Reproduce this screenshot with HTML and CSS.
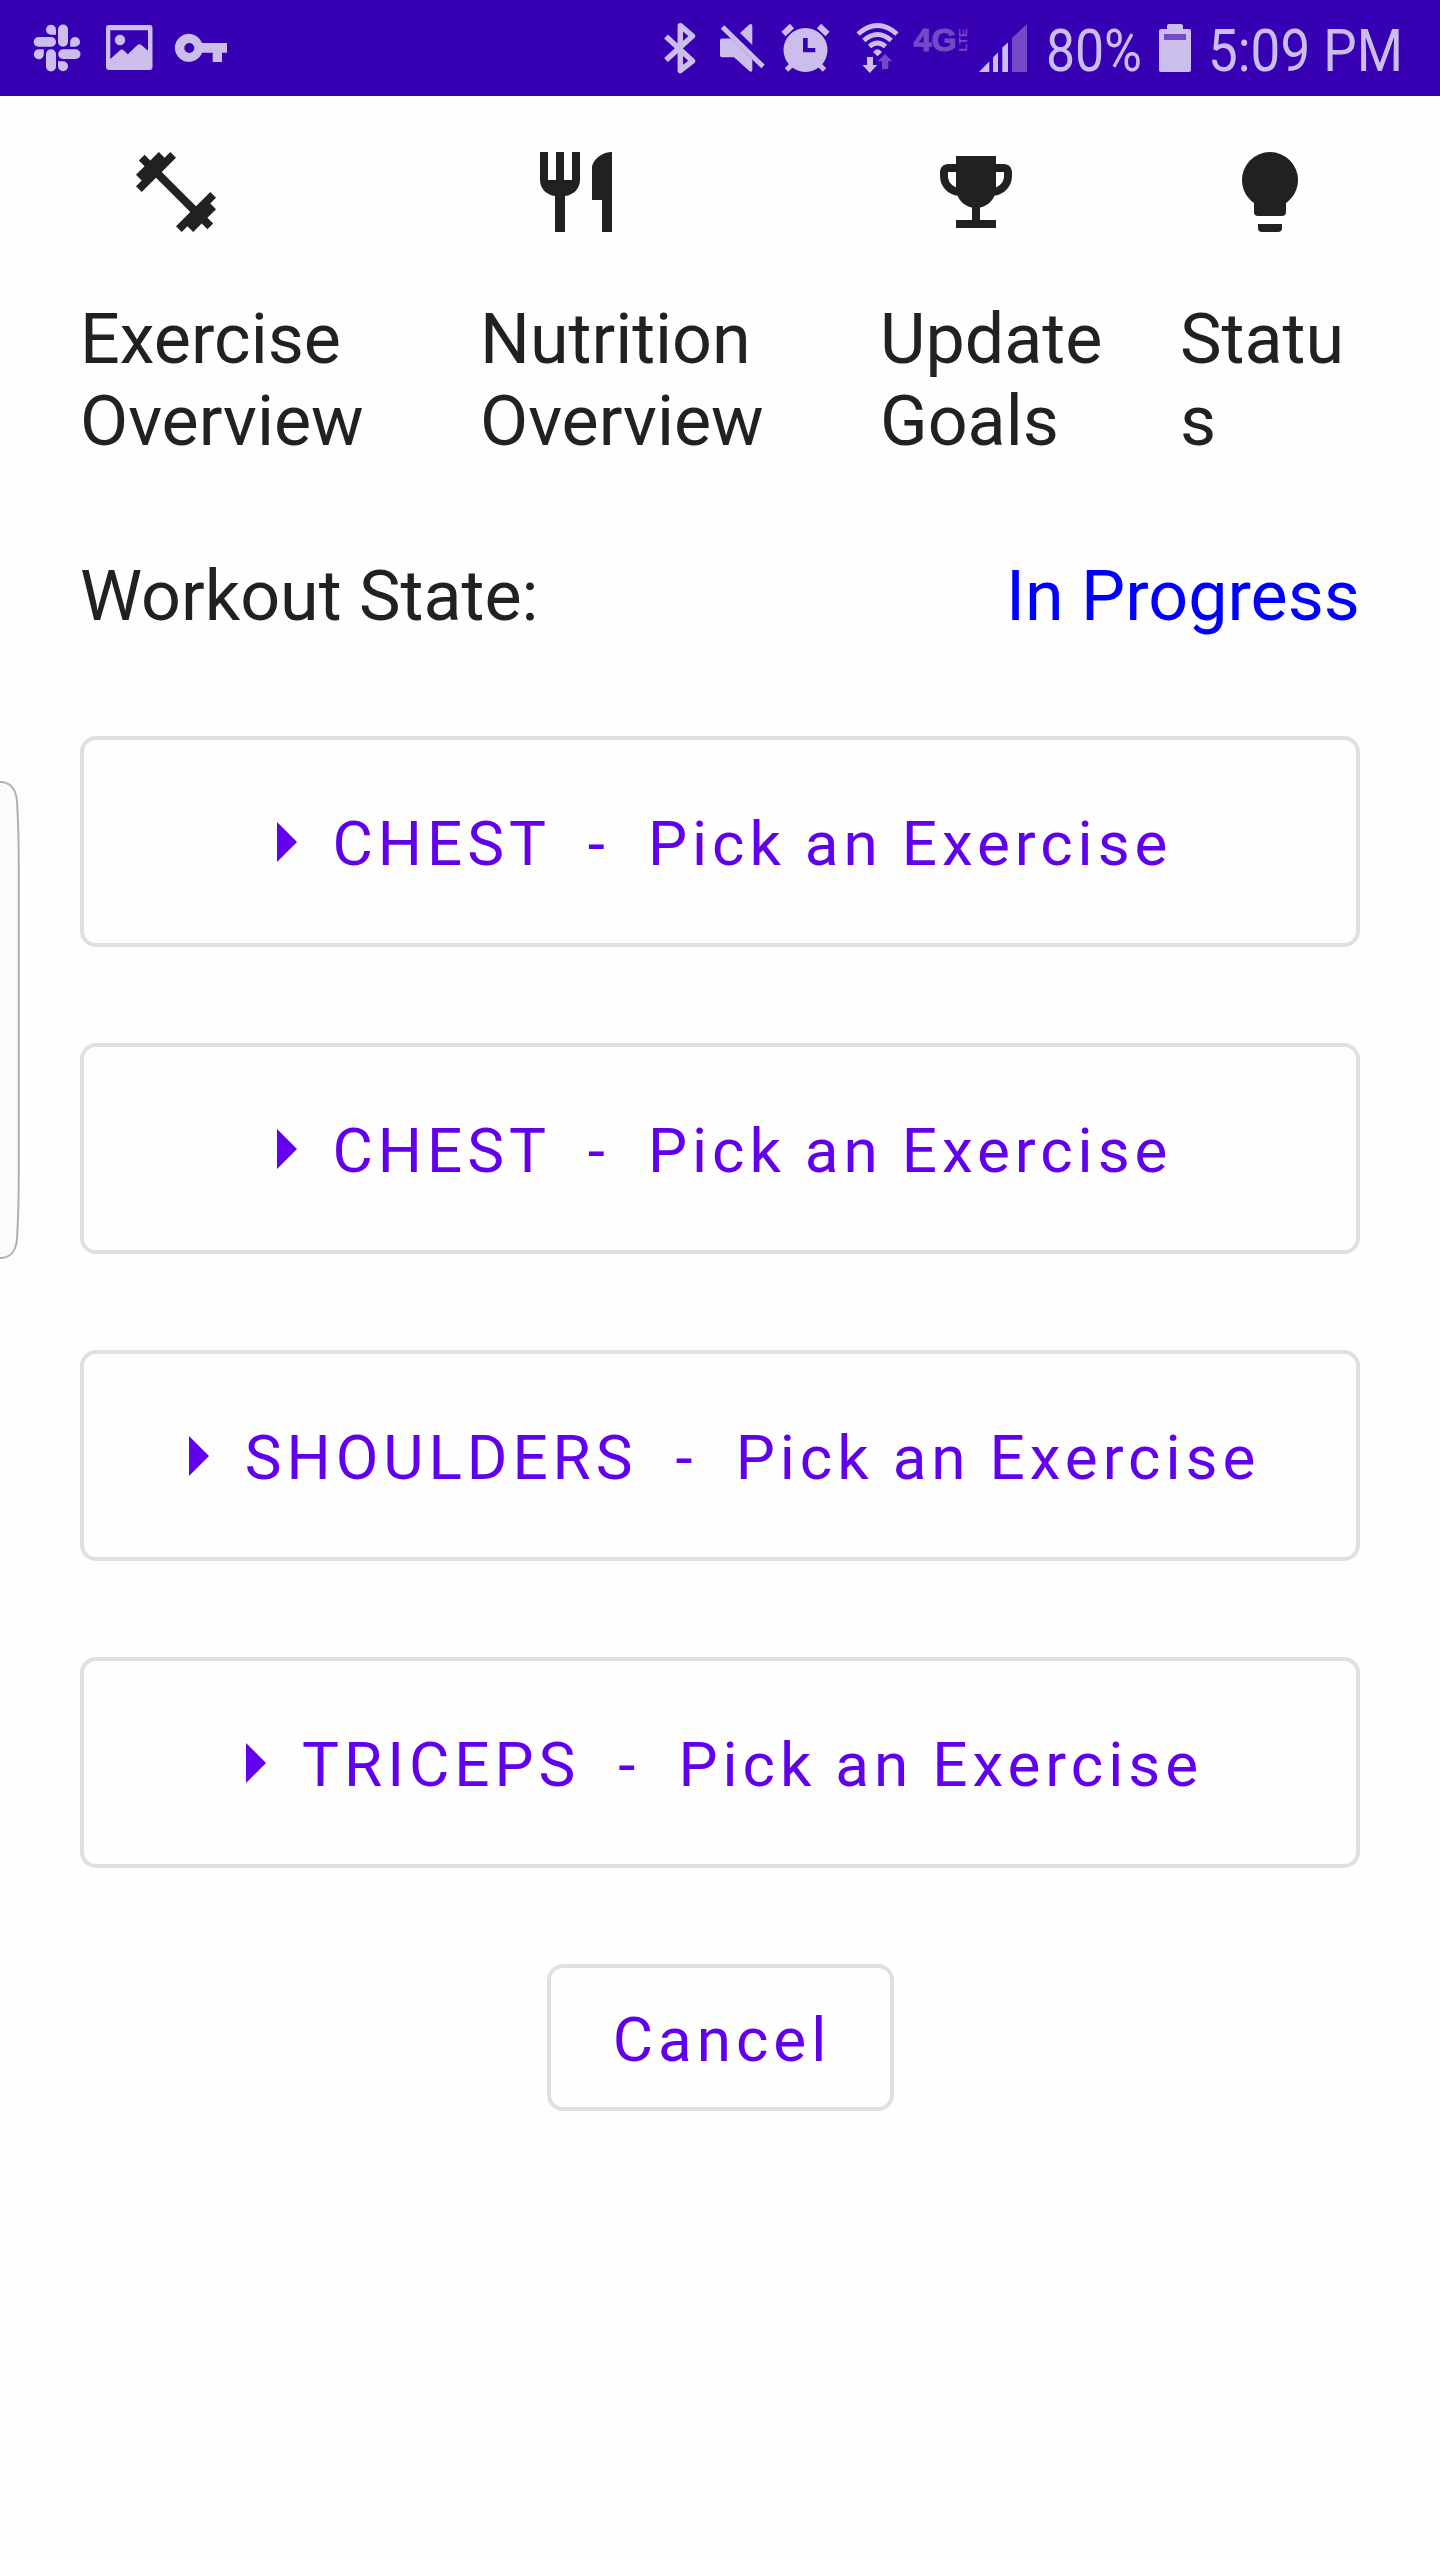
FILE: index.html
```html
<!DOCTYPE html>
<html lang="en">
<head>
<meta charset="utf-8">
<title>Workout</title>
<link rel="stylesheet" href="styles.css">
</head>
<body>
<header class="status-bar">
  <div class="status-group">
    <svg width="64" height="96" viewBox="30 0 64 96">
      <rect x="58" y="24.5" width="10" height="22.3" rx="5"/>
      <rect x="33.7" y="37" width="22.3" height="9.8" rx="4.9"/>
      <rect x="46" y="49.2" width="10" height="22.3" rx="5"/>
      <rect x="58.2" y="49.2" width="22.3" height="9.8" rx="4.9"/>
      <path d="M56 34.7V29.700a5 5 0 1 0-5 5zM70.200 46.800V41.900a4.900 4.900 0 1 1 4.900 4.900zM43.800 49.200V54.100a5 5 0 1 1-5-4.900zM58 61.200V66.300a5 5 0 1 0 5-5.100z"/>
    </svg>
    <svg width="74" height="96" viewBox="94 0 74 96">
      <path fill-rule="evenodd" d="M109 25h40.500a3 3 0 0 1 3 3v39a3 3 0 0 1-3 3H109a3 3 0 0 1-3-3V28a3 3 0 0 1 3-3zM110.300 30.300V59l9.500-8.600q2-1.600 4 0l4 3.800 9.400-9q2.300-1.800 4.500 0l6.300 5.600V30.300z"/>
      <circle cx="120" cy="40" r="5.200"/>
    </svg>
    <svg width="64" height="96" viewBox="168 0 64 96">
      <path fill-rule="evenodd" d="M202 43h25v9.700h-5V62h-9.300v-9.300H202a14 14 0 1 1 0-9.700zM184.300 48a5 5 0 1 0 10 0 5 5 0 1 0-10 0z"/>
    </svg>
  </div>
  <div class="status-group">
    <svg width="50" height="96" viewBox="656 0 50 96">
      <path class="line bluetooth" d="M666 36.500L692.500 61 680.300 70.500V25.700L692.500 36 666 60"/>
    </svg>
    <svg width="66" height="96" viewBox="706 0 66 96">
      <path d="M752.300 45V26q0-3-3-1.500L740 33zM722 38.500H731L752.300 59.500V70q0 3-3 1L734 57.300H722q-2 0-2-2V40.500q0-2 2-2z"/>
      <path class="line mute" d="M722.500 27L763 66.500"/>
    </svg>
    <svg width="76" height="96" viewBox="772 0 76 96">
      <path fill-rule="evenodd" d="M805.500 28a22 22 0 1 1 0 44 22 22 0 1 1 0-44zM803 38v14.300h12.300V48h-7.600V38z"/>
      <path class="line ear" d="M783.500 34L792 26M819 26L827.500 34"/>
      <path class="line leg" d="M786.500 70L793 63.500M818 63.500L824.500 70"/>
    </svg>
    <svg width="60" height="96" viewBox="848 0 60 96">
      <path class="line wave" d="M858 34Q877.500 17 897 34M863.800 40.500Q877.500 28.500 891.200 40.500M869.500 46.500Q877.500 39.500 885.500 46.500"/>
      <path d="M873 52q4.500-5.500 9 0l-4.500 4.300zM867 57h6v8h4.200l-7.400 8-7.400-8H867z"/>
      <path class="dim" d="M882 69h6.300v-7.800h4L885 54l-7.200 7.200H882z"/>
    </svg>
    <svg width="68" height="96" viewBox="908 0 68 96">
      <text class="dim generation" x="913.500" y="51" textLength="43" lengthAdjust="spacingAndGlyphs">4G</text>
      <text class="dim lte" transform="translate(967 51.500) rotate(-90)" textLength="23" lengthAdjust="spacingAndGlyphs">LTE</text>
    </svg>
    <svg width="62" height="96" viewBox="976 0 62 96">
      <path d="M979 72l10.300-10.500V72zM993 72V57.500l5-5V72zM1002.300 72V47.500l5.700-5V72z"/>
      <path class="dim" d="M1012 72V38l15-14v48z"/>
    </svg>
    <svg width="162" height="96" viewBox="1038 0 162 96">
      <text class="status-text" x="1046" y="71.300" textLength="96" lengthAdjust="spacingAndGlyphs">80%</text>
      <path d="M1169 24h12q2 0 2 2v3h6q2 0 2 2v39q0 2-2 2h-28q-2 0-2-2V31q0-2 2-2h6v-3q0-2 2-2z"/>
      <path class="dim" d="M1164 34h22v6h-22z"/>
    </svg>
    <svg width="240" height="96" viewBox="1200 0 240 96">
      <text class="status-text" x="1208" y="71.300" textLength="195" lengthAdjust="spacingAndGlyphs">5:09 PM</text>
    </svg>
  </div>
</header>

<nav class="tabs">
  <a class="tab">
    <svg class="tab-icon" viewBox="0 0 24 24"><path d="M20.570 14.860L22 13.430 20.570 12 17 15.570 8.430 7 12 3.430 10.570 2 9.140 3.430 7.710 2 5.570 4.140 4.140 2.710 2.710 4.140 4.140 5.570 2 7.710 3.430 9.140 2 10.570 3.430 12 7 8.430 15.570 17 12 20.570 13.430 22 14.860 20.570 16.290 22 18.430 19.860 19.860 21.290 21.290 19.860 19.860 18.430 22 16.290z"/></svg>
    <span>Exercise Overview</span>
  </a>
  <a class="tab">
    <svg class="tab-icon" viewBox="0 0 24 24"><path d="M11 9H9V2H7v7H5V2H3v7c0 2.120 1.660 3.840 3.750 3.970V22h2.500v-9.030C11.340 12.840 13 11.120 13 9V2h-2zM16 6v8h2.500v8H21V2c-2.760 0-5 2.240-5 4z"/></svg>
    <span>Nutrition Overview</span>
  </a>
  <a class="tab tab-goals">
    <svg class="tab-icon" viewBox="0 0 24 24"><path d="M19 5h-2V3H7v2H5C3.900 5 3 5.900 3 7v1c0 2.550 1.920 4.630 4.390 4.940.63 1.500 1.980 2.630 3.610 2.960V19H7v2h10v-2h-4v-3.100c1.630-.33 2.980-1.460 3.610-2.960C19.080 12.630 21 10.550 21 8V7c0-1.100-.9-2-2-2zM5 8V7h2v3.820C5.840 10.400 5 9.300 5 8zM19 8c0 1.300-.84 2.400-2 2.820V7h2z"/></svg>
    <span>Update Goals</span>
  </a>
  <a class="tab tab-status">
    <svg class="tab-icon" viewBox="0 0 24 24"><path d="M12 2A7 7 0 0 0 5 9C5 11.380 6.190 13.470 8 14.740V17A1 1 0 0 0 9 18H15A1 1 0 0 0 16 17V14.740C17.810 13.470 19 11.380 19 9A7 7 0 0 0 12 2M9 21A1 1 0 0 0 10 22H14A1 1 0 0 0 15 21V20H9z"/></svg>
    <span>Status</span>
  </a>
</nav>

<main class="workout">
  <div class="state-row">
    <span>Workout State:</span>
    <span class="state-value">In Progress</span>
  </div>
  <button class="button exercise"><svg class="arrow" viewBox="0 0 24 24"><path d="M10 17l5-5-5-5z"/></svg><span class="label">CHEST  -  Pick an Exercise</span></button>
  <button class="button exercise"><svg class="arrow" viewBox="0 0 24 24"><path d="M10 17l5-5-5-5z"/></svg><span class="label">CHEST  -  Pick an Exercise</span></button>
  <button class="button exercise"><svg class="arrow" viewBox="0 0 24 24"><path d="M10 17l5-5-5-5z"/></svg><span class="label">SHOULDERS  -  Pick an Exercise</span></button>
  <button class="button exercise"><svg class="arrow" viewBox="0 0 24 24"><path d="M10 17l5-5-5-5z"/></svg><span class="label">TRICEPS  -  Pick an Exercise</span></button>
  <button class="button cancel"><span class="label">Cancel</span></button>
</main>

<svg class="edge-handle" width="24" height="484" viewBox="0 778 24 484">
  <path d="M-2 782C10 781 16 789 17 801Q18.800 830 18.800 870V1170Q18.800 1210 17 1239C16 1251 10 1259-2 1258"/>
</svg>
</body>
</html>
```
FILE: styles.css
```css
* {
  box-sizing: border-box;
}

body {
  margin: 0;
  min-height: 2560px;
  background: #fefefe;
  color: #212121;
  font: 70px/82px Roboto, sans-serif;
}

svg {
  display: block;
  flex: none;
}

.status-bar {
  display: flex;
  justify-content: space-between;
  height: 96px;
  padding-left: 30px;
  background: #3700b3;
  fill: #cbbeec;
}

.status-group {
  display: flex;
}

.line {
  fill: none;
  stroke: #cbbeec;
}

.bluetooth {
  stroke-width: 5.5px;
  stroke-linejoin: round;
}

.mute {
  stroke-width: 5px;
}

.ear {
  stroke-width: 6px;
}

.leg {
  stroke-width: 5px;
}

.wave {
  stroke-width: 4.8px;
}

.dim {
  fill: #7548c8;
}

.generation {
  font: bold 31px "Liberation Sans", sans-serif;
  stroke: #7548c8;
  stroke-width: 1px;
}

.lte {
  font: bold 11px "Liberation Sans", sans-serif;
}

.status-text {
  font: 60px Roboto, sans-serif;
}

.tabs {
  display: flex;
  padding: 48px 80px 0;
}

.tab {
  display: flex;
  flex-direction: column;
  gap: 58px;
  width: 400px;
  padding-right: 100px;
}

.tab-goals {
  width: 300px;
  padding-right: 60px;
}

.tab-status {
  width: 180px;
  padding-right: 0;
  word-break: break-all;
}

.tab-icon {
  width: 96px;
  height: 96px;
  margin-left: 48px;
  fill: #212121;
}

.tab-status .tab-icon {
  margin-left: 42px;
}

.workout {
  display: flex;
  flex-direction: column;
  align-items: center;
  gap: 96px;
  padding: 93px 80px 0;
}

.state-row {
  display: flex;
  justify-content: space-between;
  width: 100%;
  margin-bottom: 3px;
}

.state-value {
  color: #0000ff;
}

.button {
  display: flex;
  align-items: center;
  justify-content: center;
  padding: 0;
  border: 4px solid #e0e0e0;
  border-radius: 16px;
  background: transparent;
  color: #6200ee;
  font: 62px/72px Roboto, sans-serif;
  letter-spacing: 4.95px;
  word-spacing: -1.3px;
  white-space: pre;
}

.label {
  padding-top: 5px;
}

.exercise {
  width: 100%;
  height: 211px;
  padding-right: 31px;
}

.cancel {
  width: 347px;
  height: 147px;
  padding-left: 4px;
}

.arrow {
  width: 96px;
  height: 96px;
  fill: #6200ee;
}

.edge-handle {
  position: absolute;
  left: 0;
  top: 778px;
  fill: #fbfbfb;
  stroke: #b0b0b0;
  stroke-width: 2px;
}
```
